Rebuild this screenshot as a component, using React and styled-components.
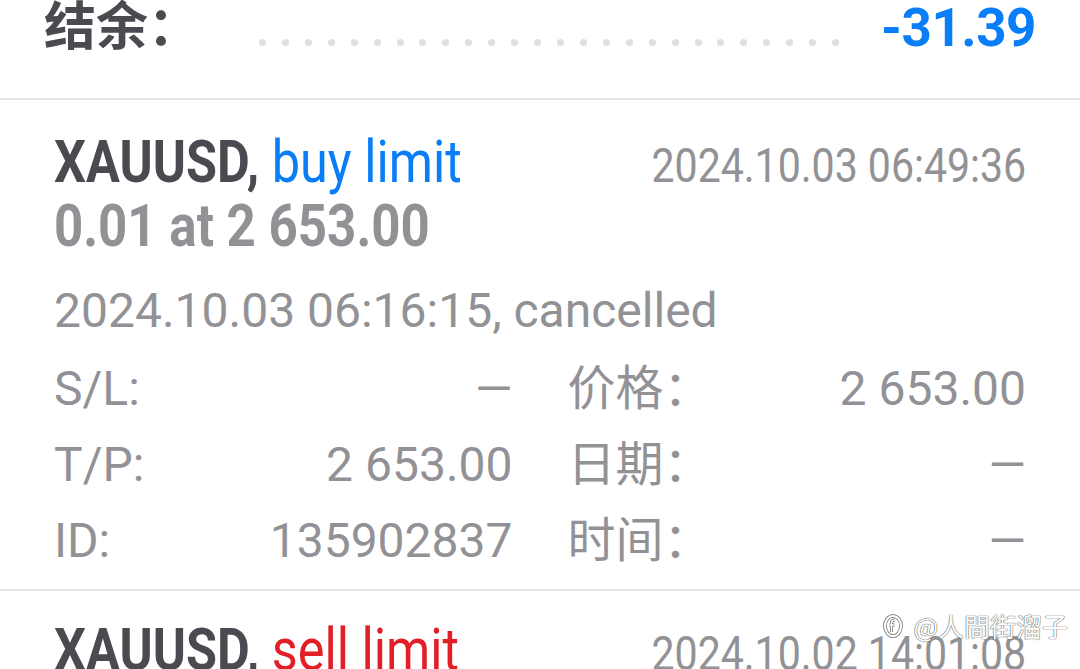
import React from "react";
import styled, { createGlobalStyle } from "styled-components";

const GlobalStyle = createGlobalStyle`
  html, body {
    margin: 0;
    padding: 0;
    background: #ffffff;
    overflow: hidden;
  }
  body {
    font-family: Roboto, "Noto Sans CJK SC", sans-serif;
    color: #929296;
  }
`;

const Page = styled.div`
  position: relative;
  width: 1080px;
  height: 669px;
  overflow: hidden;
  background: #ffffff;
`;

const BalanceRow = styled.div`
  display: flex;
  align-items: flex-start;
  height: 98px;
  padding: 0 44px 0 44px;
  border-bottom: 2px solid #e4e4e4;
`;

const BalanceLabel = styled.div`
  font-family: "Noto Sans CJK SC", sans-serif;
  font-weight: 700;
  font-size: 52px;
  line-height: 56px;
  margin-top: -5px;
  color: #4b4a50;
  width: 215px;
`;

const Dots = styled.div`
  flex: 1;
  display: flex;
  justify-content: space-between;
  margin: 39px 42px 0 0;
`;

const Dot = styled.span`
  width: 7px;
  height: 7px;
  border-radius: 50%;
  background: #e0e0e0;
`;

const BalanceValue = styled.div`
  font-weight: 700;
  font-size: 53px;
  line-height: 56px;
  letter-spacing: -0.5px;
  color: #0a7ef7;
`;

const Order = styled.div`
  padding: ${(p) => (p.$first ? "30px" : "27px")} 54px 10px 54px;
  border-bottom: 2px solid #e4e4e4;
`;

const HeaderLine = styled.div`
  display: flex;
  justify-content: space-between;
  align-items: baseline;
  height: 64px;
`;

const Squeeze = styled.span`
  display: inline-block;
  white-space: nowrap;
  transform: scaleX(${(p) => p.$k || 0.84});
  transform-origin: ${(p) => (p.$right ? "right" : "left")} center;
`;

const Symbol = styled.span`
  font-weight: 700;
  font-size: 60px;
  line-height: 64px;
  color: #4b4a50;
`;

const Kind = styled.span`
  font-weight: 400;
  color: ${(p) => (p.$sell ? "#e21f26" : "#0a7ef7")};
`;

const OpenTime = styled.span`
  font-size: 48px;
  line-height: 64px;
  color: #929296;
`;

const Amount = styled.div`
  font-weight: 700;
  font-size: 59px;
  line-height: 64px;
  color: #929296;
`;

const StatusLine = styled.div`
  margin-top: 15px;
  font-size: 48px;
  line-height: 76px;
  color: #929296;
  white-space: nowrap;
`;

const Details = styled.div`
  display: grid;
  grid-template-columns: 1fr 1fr;
  column-gap: 55px;
  margin-top: 2px;
`;

const Field = styled.div`
  display: flex;
  justify-content: space-between;
  font-size: 48px;
  line-height: 76px;
  color: #929296;
  white-space: nowrap;
`;

const FieldLabel = styled.span`
  font-family: Roboto, "Noto Sans CJK SC", sans-serif;
`;

const Watermark = styled.div`
  position: absolute;
  right: 12px;
  bottom: 28px;
  display: flex;
  align-items: center;
  gap: 10px;
  font-family: "Noto Sans CJK SC", sans-serif;
  font-size: 26px;
  line-height: 30px;
  color: #ffffff;
  text-shadow: 0 0 1px #444, 0 0 1px #444;
`;

const dots = Array.from({ length: 26 });

const Mark = () => (
  <svg width="20" height="24" viewBox="0 0 20 24" fill="none">
    <ellipse cx="10" cy="12" rx="8" ry="10" stroke="#666" strokeWidth="3.6" />
    <ellipse cx="10" cy="12" rx="8" ry="10" stroke="#ffffff" strokeWidth="2.2" />
    <path d="M11.5 6c-2 0-3 1-3 3v9M6.5 11h5" stroke="#666" strokeWidth="3" />
    <path d="M11.5 6c-2 0-3 1-3 3v9M6.5 11h5" stroke="#ffffff" strokeWidth="1.6" />
  </svg>
);

function Row({ label, value }) {
  return (
    <Field>
      <FieldLabel>{label}</FieldLabel>
      <span>{value}</span>
    </Field>
  );
}

export default function App() {
  return (
    <Page>
      <GlobalStyle />
      <BalanceRow>
        <BalanceLabel>结余：</BalanceLabel>
        <Dots>
          {dots.map((_, i) => (
            <Dot key={i} />
          ))}
        </Dots>
        <BalanceValue>-31.39</BalanceValue>
      </BalanceRow>

      <Order $first>
        <HeaderLine>
          <Symbol>
            <Squeeze>
              XAUUSD, <Kind>buy limit</Kind>
            </Squeeze>
          </Symbol>
          <OpenTime>
            <Squeeze $right $k={0.855}>
              2024.10.03 06:49:36
            </Squeeze>
          </OpenTime>
        </HeaderLine>
        <Amount>
          <Squeeze $k={0.865}>0.01 at 2 653.00</Squeeze>
        </Amount>
        <StatusLine>2024.10.03 06:16:15, cancelled</StatusLine>
        <Details>
          <Row label="S/L:" value="—" />
          <Row label="价格：" value="2 653.00" />
          <Row label="T/P:" value="2 653.00" />
          <Row label="日期：" value="—" />
          <Row label="ID:" value="135902837" />
          <Row label="时间：" value="—" />
        </Details>
      </Order>

      <Order>
        <HeaderLine>
          <Symbol>
            <Squeeze>
              XAUUSD, <Kind $sell>sell limit</Kind>
            </Squeeze>
          </Symbol>
          <OpenTime>
            <Squeeze $right $k={0.855}>
              2024.10.02 14:01:08
            </Squeeze>
          </OpenTime>
        </HeaderLine>
      </Order>

      <Watermark>
        <Mark />
        <span>@人間街溜子</span>
      </Watermark>
    </Page>
  );
}
